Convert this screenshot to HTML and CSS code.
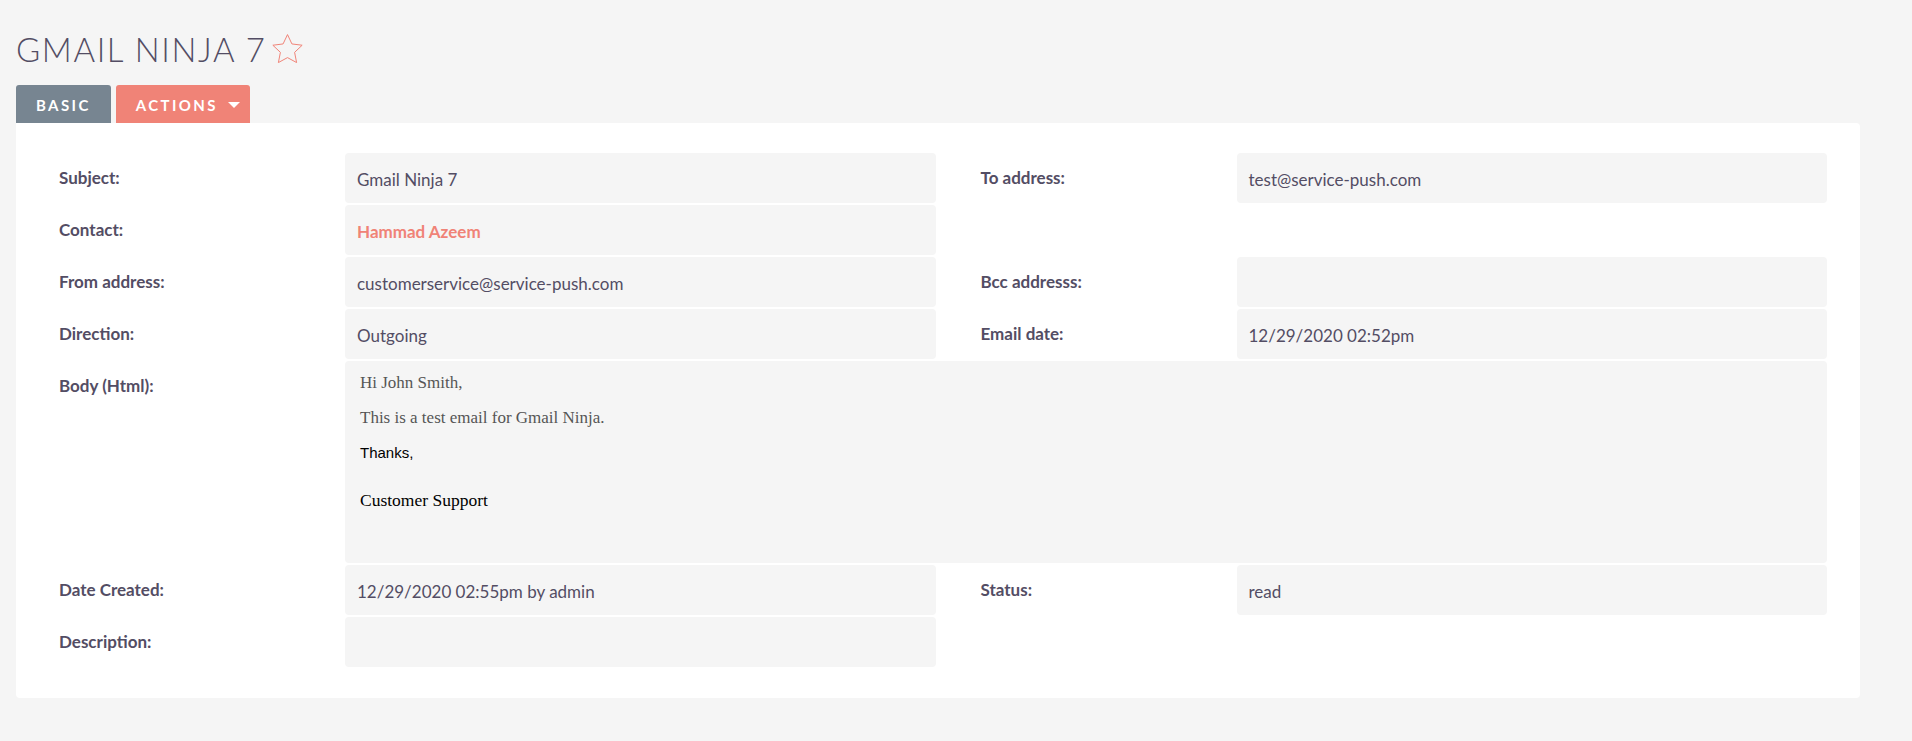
FILE: index.html
```html
<html>
  <head>
    <meta charset="utf-8">
    <title>Gmail Ninja 7</title>
    <link rel="stylesheet" href="styles.css">
  </head>
  <body>
    <div class="page">

      <h2 class="title">
        GMAIL NINJA 7
        <svg class="fav" viewBox="1.4 1.2 21.2 20.4" width="31" height="29">
          <path d="M12 1.6l3.1 6.6 7.2.9-5.3 5 1.4 7.2L12 17.8l-6.4 3.5 1.4-7.2-5.3-5 7.2-.9z" />
        </svg>
      </h2>

      <div class="tabs">
        <div class="tab basic">BASIC</div>
        <div class="tab actions">ACTIONS <span class="caret"></span></div>
      </div>

      <div class="panel">
        <div class="grid">
          <!-- row: subject -->
          <div class="label">Subject:</div>
          <div class="value">Gmail Ninja 7</div>
          <div class="spacer"></div>
          <div class="label">To address:</div>
          <div class="value">test@service-push.com</div>

          <!-- row: contact -->
          <div class="label">Contact:</div>
          <div class="value"><a class="link" href="#">Hammad Azeem</a></div>
          <div class="spacer"></div>
          <div class="label"></div>
          <div class="blank"></div>

          <!-- row: from -->
          <div class="label">From address:</div>
          <div class="value">customerservice@service-push.com</div>
          <div class="spacer"></div>
          <div class="label">Bcc addresss:</div>
          <div class="value"></div>

          <!-- row: direction -->
          <div class="label">Direction:</div>
          <div class="value">Outgoing</div>
          <div class="spacer"></div>
          <div class="label">Email date:</div>
          <div class="value">12/29/2020 02:52pm</div>

          <!-- row: body -->
          <div class="label">Body (Html):</div>
          <div class="value body-html">
            <p class="g">Hi John Smith,</p>
            <p class="g">This is a test email for Gmail Ninja.</p>
            <p class="a">Thanks,</p>
            <p class="t">Customer Support</p>
          </div>

          <!-- row: created -->
          <div class="label">Date Created:</div>
          <div class="value">12/29/2020 02:55pm by admin</div>
          <div class="spacer"></div>
          <div class="label">Status:</div>
          <div class="value">read</div>

          <!-- row: description -->
          <div class="label">Description:</div>
          <div class="value"></div>
          <div class="spacer"></div>
          <div class="label"></div>
          <div class="blank"></div>
        </div>
      </div>

    </div>
  </body>
</html>
```

FILE: styles.css
```css
body {
  margin: 0;
  background: #f5f5f5;
  font-family: Lato, "Open Sans", sans-serif;
  color: #534d64;
}

.page {
  width: 1844px;
  margin-left: 16px;
}

.title {
  margin: 0;
  padding-top: 33px;
  font-size: 33px;
  line-height: 33px;
  font-weight: 300;
  letter-spacing: 1.6px;
  color: #534d64;
  display: flex;
  align-items: center;
}

.fav {
  margin-left: 6px;
  margin-top: -3px;
  fill: none;
  stroke: #f08377;
  stroke-width: 0.7;
}

.tabs {
  display: flex;
  gap: 5px;
  margin-top: 19px;
}

.tab {
  height: 38px;
  box-sizing: border-box;
  padding: 2px 20px 0 20px;
  line-height: 36px;
  font-size: 15px;
  font-weight: 700;
  letter-spacing: 2.4px;
  color: #fff;
  border-radius: 3px 3px 0 0;
}

.basic {
  background: #778591;
}

.actions {
  background: #f08377;
  padding-right: 10px;
}

.caret {
  display: inline-block;
  width: 0;
  height: 0;
  margin-left: 4px;
  vertical-align: 3px;
  border-left: 6px solid transparent;
  border-right: 6px solid transparent;
  border-top: 6px solid #fff;
}

.panel {
  background: #fff;
  border-radius: 0 4px 4px 4px;
  padding: 30px 33px 31px 43px;
}

.grid {
  display: grid;
  grid-template-columns: 286px 1fr 45px 256px 1fr;
  row-gap: 2px;
}

.label {
  font-size: 17px;
  font-weight: 700;
  line-height: 50px;
  color: #534d64;
}

.value {
  min-height: 50px;
  box-sizing: border-box;
  padding: 4px 12px 0 12px;
  line-height: 46px;
  font-size: 17px;
  background: #f5f5f5;
  border-radius: 4px;
}

.link {
  color: #f08377;
  font-weight: 700;
  text-decoration: none;
}

.body-html {
  grid-column: 2 / 6;
  height: 202px;
  padding: 4px 15px 0 15px;
  line-height: normal;
}

.body-html p {
  margin: 0;
}

.body-html .g {
  font-family: "Liberation Serif", serif;
  font-size: 17px;
  line-height: 35px;
  color: #555;
}

.body-html .a {
  font-family: "Liberation Sans", Arial, sans-serif;
  font-size: 15px;
  line-height: 36px;
  color: #000;
}

.body-html .t {
  font-family: "Liberation Serif", serif;
  font-size: 17.5px;
  line-height: 26px;
  margin-top: 16px;
  color: #000;
}
```
